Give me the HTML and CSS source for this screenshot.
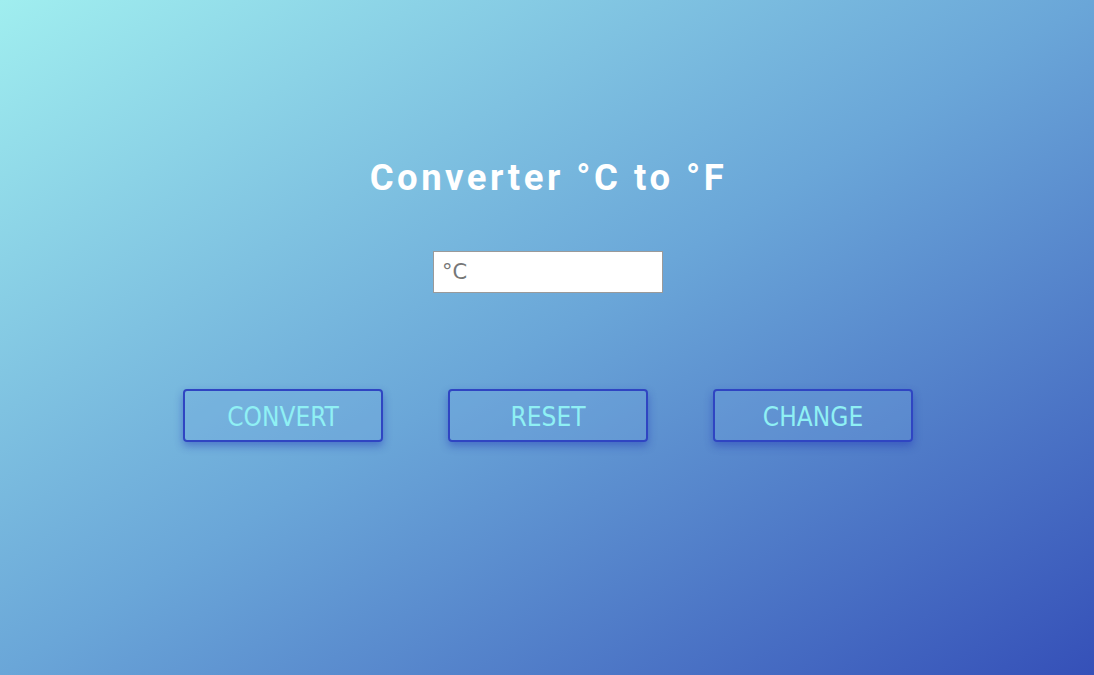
FILE: index.html
```html
<!DOCTYPE html>
<html>
<head>
<meta charset="utf-8">
<link rel="stylesheet" href="styles.css">
</head>
<body>
<main class="app">
  <h1 class="title">Converter °C to °F</h1>
  <input class="field" type="text" placeholder="°C">
  <div class="actions">
    <button class="btn">CONVERT</button>
    <button class="btn">RESET</button>
    <button class="btn">CHANGE</button>
  </div>
</main>
</body>
</html>
```

FILE: styles.css
```css
html, body {
  margin: 0;
  height: 100%;
}
body {
  background: linear-gradient(to bottom right, #a0eeef 0%, #6aa6d8 50%, #3550b8 100%);
  font-family: "DejaVu Sans", sans-serif;
}
.app {
  display: flex;
  flex-direction: column;
  align-items: center;
  padding-top: 153px;
  padding-left: 2px;
}
.title {
  margin: 0;
  padding-left: 1px;
  font-family: Roboto, sans-serif;
  font-weight: 700;
  font-size: 36.5px;
  line-height: 50px;
  letter-spacing: 3.5px;
  color: #fff;
}
.field {
  margin-top: 48px;
  width: 230px;
  height: 42px;
  box-sizing: border-box;
  border: 1px solid #9a9a9a;
  padding: 0 8px;
  font-family: "DejaVu Sans", sans-serif;
  font-size: 21px;
  color: #333;
  background: #fff;
}
.field::placeholder {
  color: #777;
}
.actions {
  margin-top: 96px;
  display: flex;
  gap: 65px;
}
.btn {
  width: 200px;
  height: 53px;
  box-sizing: border-box;
  border: 2px solid #2f45c2;
  border-radius: 4px;
  background: rgba(120, 170, 225, 0.25);
  box-shadow: 0 4px 8px rgba(30, 50, 180, 0.45);
  color: #8ff0f4;
  font-family: "DejaVu Sans Condensed", "DejaVu Sans", sans-serif;
  font-size: 26px;
  padding: 2px 0 0;
}
```
